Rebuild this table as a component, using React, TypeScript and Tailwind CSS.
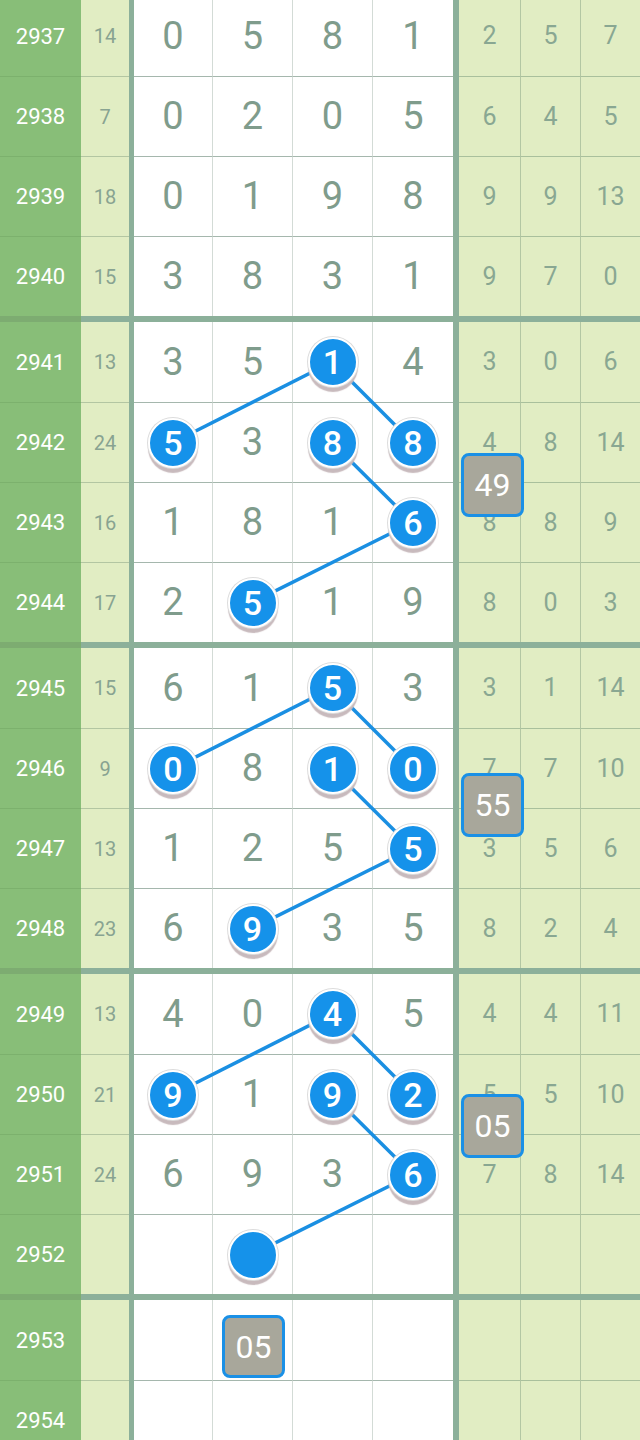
import React from "react";

type Cell = { v: string; ball?: boolean };
type Row = { n: string; s: string; d: Cell[]; r: string[] };

const c = (v: string, ball = false): Cell => ({ v, ball });

const groups: Row[][] = [
  [
    { n: "2937", s: "14", d: [c("0"), c("5"), c("8"), c("1")], r: ["2", "5", "7"] },
    { n: "2938", s: "7", d: [c("0"), c("2"), c("0"), c("5")], r: ["6", "4", "5"] },
    { n: "2939", s: "18", d: [c("0"), c("1"), c("9"), c("8")], r: ["9", "9", "13"] },
    { n: "2940", s: "15", d: [c("3"), c("8"), c("3"), c("1")], r: ["9", "7", "0"] },
  ],
  [
    { n: "2941", s: "13", d: [c("3"), c("5"), c("1", true), c("4")], r: ["3", "0", "6"] },
    { n: "2942", s: "24", d: [c("5", true), c("3"), c("8", true), c("8", true)], r: ["4", "8", "14"] },
    { n: "2943", s: "16", d: [c("1"), c("8"), c("1"), c("6", true)], r: ["8", "8", "9"] },
    { n: "2944", s: "17", d: [c("2"), c("5", true), c("1"), c("9")], r: ["8", "0", "3"] },
  ],
  [
    { n: "2945", s: "15", d: [c("6"), c("1"), c("5", true), c("3")], r: ["3", "1", "14"] },
    { n: "2946", s: "9", d: [c("0", true), c("8"), c("1", true), c("0", true)], r: ["7", "7", "10"] },
    { n: "2947", s: "13", d: [c("1"), c("2"), c("5"), c("5", true)], r: ["3", "5", "6"] },
    { n: "2948", s: "23", d: [c("6"), c("9", true), c("3"), c("5")], r: ["8", "2", "4"] },
  ],
  [
    { n: "2949", s: "13", d: [c("4"), c("0"), c("4", true), c("5")], r: ["4", "4", "11"] },
    { n: "2950", s: "21", d: [c("9", true), c("1"), c("9", true), c("2", true)], r: ["5", "5", "10"] },
    { n: "2951", s: "24", d: [c("6"), c("9"), c("3"), c("6", true)], r: ["7", "8", "14"] },
    { n: "2952", s: "", d: [c(""), c("", true), c(""), c("")], r: ["", "", ""] },
  ],
  [
    { n: "2953", s: "", d: [c(""), c(""), c(""), c("")], r: ["", "", ""] },
    { n: "2954", s: "", d: [c(""), c(""), c(""), c("")], r: ["", "", ""] },
  ],
];

const whiteW = ["w-[78px]", "w-[80px]", "w-[80px]", "w-[81px]"];
const greenW = ["w-[61px]", "w-[60px]", "w-[60px]"];

function Ball({ v }: { v: string }) {
  return (
    <div className="relative z-[2] flex h-[50px] w-[50px] items-center justify-center rounded-full border-2 border-white bg-[#1592ea] text-[34px] font-medium leading-none text-white shadow-[0_0_0_1px_#dcdcdc,0_5px_1px_#c8babd]">
      {v}
    </div>
  );
}

function RowView({ row, first }: { row: Row; first: boolean }) {
  const bt = first ? "" : "border-t";
  return (
    <div className="flex h-20">
      <div className={`flex w-[81px] items-center justify-center bg-[#88be78] text-[22px] text-white ${bt} border-[#7cb16d]`}>
        {row.n}
      </div>
      <div className={`flex w-[48px] items-center justify-center bg-[#e1edc3] text-[20px] text-[#88a391] ${bt} border-[#b3c6a2]`}>
        {row.s}
      </div>
      <div className="w-[5px] bg-[#8cb09a]" />
      {row.d.map((cell, i) => (
        <div
          key={i}
          className={`flex ${whiteW[i]} items-center justify-center bg-white text-[38px] text-[#7f9c8c] ${bt} border-t-[#a5b7ad] ${i > 0 ? "border-l border-l-[#d3dbd6]" : ""}`}
        >
          {cell.ball ? <Ball v={cell.v} /> : cell.v}
        </div>
      ))}
      <div className="w-[6px] bg-[#8cb09a]" />
      {row.r.map((v, i) => (
        <div
          key={i}
          className={`flex ${greenW[i]} items-center justify-center bg-[#e1edc3] text-[25px] text-[#89a792] ${bt} border-t-[#a9c09c] ${i > 0 ? "border-l border-l-[#b3c7a3]" : ""}`}
        >
          {v}
        </div>
      ))}
    </div>
  );
}

function Thick() {
  return (
    <div className="flex h-[6px]">
      <div className="w-[81px] bg-[#7dac71]" />
      <div className="flex-1 bg-[#8cb09a]" />
    </div>
  );
}

function Box({ v, cls }: { v: string; cls: string }) {
  return (
    <div
      className={`absolute z-[3] flex items-center justify-center rounded-[8px] border-[3px] border-[#1a90e6] bg-[#a8a79b] text-[32px] leading-none text-white ${cls}`}
    >
      {v}
    </div>
  );
}

export default function App() {
  const A = 173, B = 252, C = 332, D = 412.5;
  const lines: [number, number, number, number][] = [];
  [1, 2, 3].forEach((g) => {
    const S = -4 + 326 * g;
    const y0 = S + 40, y1 = S + 120.5, y2 = S + 200.5, y3 = S + 280.5;
    lines.push([C, y0, A, y1]);
    lines.push([C, y0, D, y1]);
    lines.push([C, y1, D, y2]);
    lines.push([D, y2, B, y3]);
  });
  return (
    <div
      className="relative h-[1440px] w-[640px] overflow-hidden bg-white"
      style={{ fontFamily: "Roboto, 'Noto Sans', sans-serif" }}
    >
      <div className="-mt-[4px]">
        {groups.map((g, gi) => (
          <div key={gi}>
            {g.map((row, ri) => (
              <RowView key={row.n} row={row} first={ri === 0} />
            ))}
            {gi < groups.length - 1 && <Thick />}
          </div>
        ))}
      </div>
      <svg className="pointer-events-none absolute left-0 top-0 z-[1]" width="640" height="1440">
        {lines.map(([x1, y1, x2, y2], i) => (
          <line key={i} x1={x1} y1={y1} x2={x2} y2={y2} stroke="#1a8fe2" strokeWidth="3.5" />
        ))}
      </svg>
      <Box v="49" cls="left-[461px] top-[453px] h-[64px] w-[63px]" />
      <Box v="55" cls="left-[461px] top-[773px] h-[64px] w-[63px]" />
      <Box v="05" cls="left-[461px] top-[1094px] h-[64px] w-[63px]" />
      <Box v="05" cls="left-[222px] top-[1315px] h-[63px] w-[63px]" />
    </div>
  );
}
